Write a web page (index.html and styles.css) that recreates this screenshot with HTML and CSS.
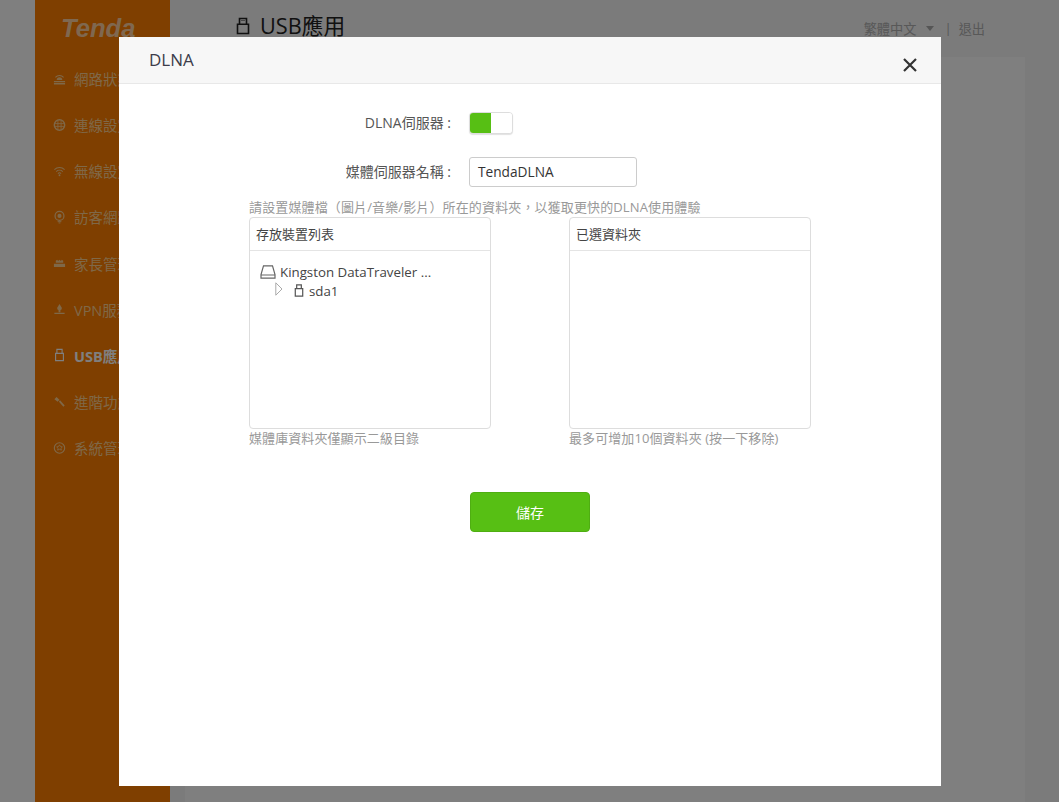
FILE: index.html
```html
<!DOCTYPE html>
<html lang="zh-Hant">
<head>
<meta charset="utf-8">
<title>USB應用</title>
<link rel="stylesheet" href="styles.css">
</head>
<body>
<div class="page">
  <aside class="sidebar">
    <div class="logo">Tenda</div>
    <nav class="nav">
      <a class="nav-item"><svg class="nav-icon" viewBox="0 0 14 14"><path d="M1 9.2h12v1.2H1zM1 11.4h12v1.4H1z" fill="currentColor"/><path d="M4 8.2a3 3 0 0 1 6 0z" fill="currentColor"/><path d="M2.6 5.2a6 6 0 0 1 8.8 0M4.4 3.2" fill="none" stroke="currentColor" stroke-width="1.1"/></svg>網路狀態</a>
      <a class="nav-item"><svg class="nav-icon" viewBox="0 0 14 14"><circle cx="7" cy="7" r="5.6" fill="none" stroke="currentColor" stroke-width="1.5"/><path d="M2 5.5h10M2 8.5h10M5.3 2v10M8.7 2v10" stroke="currentColor" stroke-width=".9" fill="none"/></svg>連線設定</a>
      <a class="nav-item"><svg class="nav-icon" viewBox="0 0 14 14"><path d="M1.5 5.5a8 8 0 0 1 11 0M3.5 7.7a5 5 0 0 1 7 0M5.3 9.7a2.5 2.5 0 0 1 3.4 0" fill="none" stroke="currentColor" stroke-width="1.1"/><circle cx="7" cy="11.6" r="1" fill="currentColor"/></svg>無線設定</a>
      <a class="nav-item"><svg class="nav-icon" viewBox="0 0 14 14"><circle cx="7" cy="5.8" r="4.8" fill="none" stroke="currentColor" stroke-width="1.3"/><circle cx="7" cy="5.8" r="2.2" fill="currentColor"/><path d="M5 12h4M6 13.4h2" stroke="currentColor"/></svg>訪客網路</a>
      <a class="nav-item"><svg class="nav-icon" viewBox="0 0 14 14"><path d="M1 7.8h12v3.6H1zM3 6.8V4.6l1.5-1 1 1.2L7 3.6l1.5 1.2 1-1.2 1.5 1v2.2z" fill="currentColor"/></svg>家長管理</a>
      <a class="nav-item"><svg class="nav-icon" viewBox="0 0 14 14"><path d="M7 1.5 9.6 6a2.6 2.6 0 1 1-5.2 0z" fill="currentColor"/><path d="M6 8h2v2.5H6zM1.5 11h11v1.4h-11z" fill="currentColor"/></svg>VPN服務</a>
      <a class="nav-item active"><svg class="nav-icon" viewBox="0 0 14 14"><path d="M4.2 5V1h5.6v4M2.8 5.2h8.4v7.8H2.8z" fill="none" stroke="currentColor" stroke-width="1.2"/></svg>USB應用</a>
      <a class="nav-item"><svg class="nav-icon" viewBox="0 0 14 14"><path d="M1.5 4 3.8 1.6 7 4.6 5 6.8zM6.4 6.6 7.6 5.2l5 5.6-1.4 1.4z" fill="currentColor"/></svg>進階功能</a>
      <a class="nav-item"><svg class="nav-icon" viewBox="0 0 14 14"><circle cx="7" cy="7" r="5.6" fill="none" stroke="currentColor" stroke-width="1.2"/><path d="M7 3.6 8 5.4l2 .3-1.4 1.6.4 2-2-.9-2 .9.4-2L4 5.7l2-.3z" fill="none" stroke="currentColor" stroke-width=".9"/></svg>系統管理</a>
    </nav>
  </aside>
  <main class="main">
    <header class="topbar">
      <h1 class="page-title"><svg class="title-icon" viewBox="0 0 14 18"><path d="M3.5 7V1.5h7V7M1.5 7.2h11v9.3h-11z" fill="none" stroke="currentColor" stroke-width="1.6"/><path d="M5.5 3.5h1M7.5 3.5h1" stroke="currentColor"/></svg>USB應用</h1>
      <div class="top-links"><span>繁體中文</span><i class="caret"></i><span class="sep">|</span><span>退出</span></div>
    </header>
    <div class="panel"></div>
  </main>
</div>
<div class="overlay">
  <section class="modal">
    <header class="modal-head">
      <h2 class="modal-title">DLNA</h2>
      <svg class="close" viewBox="0 0 14 14"><path d="M1 1l12 12M13 1 1 13" stroke="currentColor" stroke-width="2.2" fill="none"/></svg>
    </header>
    <div class="modal-body">
      <div class="row row-toggle">
        <label class="row-label">DLNA伺服器 :</label>
        <div class="toggle"><span class="toggle-on"></span><span class="toggle-off"></span></div>
      </div>
      <div class="row row-input">
        <label class="row-label">媒體伺服器名稱 :</label>
        <div class="text-input">TendaDLNA</div>
      </div>
      <p class="hint">請設置媒體檔（圖片/音樂/影片）所在的資料夾，以獲取更快的DLNA使用體驗</p>
      <div class="lists">
        <div class="list-col">
          <div class="list-box">
            <div class="list-head">存放裝置列表</div>
            <div class="tree">
              <div class="tree-row"><svg class="hdd" viewBox="0 0 16 14"><path d="M3.5 .8h9L15 9.5v3.7H1V9.5zM1 10h14" fill="none" stroke="currentColor" stroke-width="1.2"/></svg>Kingston DataTraveler ...</div>
              <div class="tree-row tree-sub"><svg class="arrow" viewBox="0 0 8 14"><path d="M.8 .8 7 7 .8 13.2z" fill="none" stroke="currentColor"/></svg><svg class="usb" viewBox="0 0 10 14"><path d="M2.5 5V1h5v4M1 5h8v8H1z" fill="none" stroke="currentColor" stroke-width="1.3"/></svg>sda1</div>
            </div>
          </div>
          <p class="note">媒體庫資料夾僅顯示二級目錄</p>
        </div>
        <div class="list-col">
          <div class="list-box">
            <div class="list-head">已選資料夾</div>
          </div>
          <p class="note">最多可增加10個資料夾 (按一下移除)</p>
        </div>
      </div>
      <button class="save" type="button">儲存</button>
    </div>
  </section>
</div>
</body>
</html>
```
FILE: styles.css
```css
* { box-sizing: border-box; }
html, body { margin: 0; height: 100%; overflow: hidden; }
body {
  font-family: "Open Sans", "Noto Sans CJK TC", sans-serif;
  font-size: 14px;
  color: #333;
  background: #fff;
}
.page { display: flex; height: 802px; padding-left: 35px; }
.sidebar { width: 135px; background: #ff7e00; color: #ffd090; flex: none; }
.logo {
  font-family: "Liberation Sans", sans-serif;
  font-style: italic;
  font-weight: 700;
  font-size: 25.6px;
  line-height: 30px;
  color: #ffd0a0;
  padding: 13px 0 0 26px;
  letter-spacing: 0;
}
.nav { margin-top: 12.5px; display: flex; flex-direction: column; }
.nav-item {
  display: flex;
  align-items: center;
  height: 46.15px;
  padding-left: 18px;
  font-size: 14.5px;
  white-space: nowrap;
}
.nav-item.active { color: #fff; font-weight: 700; }
.nav-icon { width: 13px; height: 14px; margin-right: 8px; flex: none; }
.main { flex: 1; background: #f6f6f6; padding-left: 15px; display: flex; flex-direction: column; }
.topbar { height: 57px; display: flex; justify-content: space-between; padding-right: 40px; width: 840px; }
.page-title {
  margin: 10px 0 0 51px;
  font-size: 21.7px;
  font-weight: 400;
  line-height: 32px;
  height: 32px;
  display: flex;
  align-items: center;
  color: #222;
}
.title-icon { width: 14px; height: 18px; margin-right: 10px; }
.top-links { display: flex; align-items: center; height: 20px; margin-top: 18px; font-size: 13.2px; color: #b0b0b0; }
.caret { width: 0; height: 0; border: 4px solid transparent; border-top: 5px solid #aaa; border-bottom: 0; margin: 1px 0 0 10px; }
.sep { margin: 0 7px 0 10px; }
.panel { width: 840px; flex: 1; background: #fff; }
.overlay { position: absolute; inset: 0; background: rgba(0, 0, 0, .5); padding: 37px 0 0 119px; }
.modal { width: 822px; height: 749px; background: #fff; }
.modal-head {
  height: 47px;
  background: #f7f7f7;
  border-bottom: 1px solid #e8e8e8;
  display: flex;
  justify-content: space-between;
  padding: 0 24px 0 30px;
}
.modal-title { margin: 12px 0 0; font-size: 17px; font-weight: 400; line-height: 22px; color: #3c3c4a; }
.close { width: 14px; height: 14px; margin-top: 21px; color: #333; }
.modal-body { width: 562px; margin: 0 auto; display: flex; flex-direction: column; }
.row { display: flex; align-items: center; color: #555; }
.row-toggle { margin-top: 28px; height: 22px; }
.row-input { margin-top: 23px; height: 30px; }
.row-label { width: 202px; margin-right: 18px; margin-bottom: 3px; text-align: right; white-space: nowrap; }
.toggle { width: 44px; height: 22px; display: flex; border: 1px solid #ddd; border-radius: 4px; overflow: hidden; background: #fff; box-shadow: 0 1px 1px rgba(0, 0, 0, .12); }
.toggle-on { width: 21px; background: #57bf14; }
.toggle-off { flex: 1; background: #fff; }
.text-input {
  width: 168px;
  height: 30px;
  border: 1px solid #ccc;
  border-radius: 3px;
  padding: 0 8px;
  font-size: 13.7px;
  line-height: 28px;
  color: #333;
}
.hint { margin: 11px 0 0; font-size: 13px; line-height: 19px; letter-spacing: .13px; color: #999; white-space: nowrap; }
.lists { display: flex; justify-content: space-between; margin-top: 0; }
.list-col { width: 242px; }
.list-box { height: 212px; border: 1px solid #ddd; border-radius: 4px; }
.list-head { height: 33px; padding-left: 6px; line-height: 32px; font-size: 13px; color: #444; border-bottom: 1px solid #e4e4e4; }
.tree { padding: 11px 0 0 10px; font-size: 13.3px; color: #444; }
.tree-row { display: flex; align-items: center; height: 19px; white-space: nowrap; }
.tree-sub { padding-left: 15px; }
.hdd { width: 16px; height: 14px; margin-right: 4px; color: #666; }
.arrow { width: 8px; height: 14px; margin: -4px 11px 0 0; color: #aaa; }
.usb { width: 10px; height: 13px; margin-right: 5px; color: #555; }
.note { margin: 0; font-size: 13px; line-height: 19px; letter-spacing: .08px; color: #999; white-space: nowrap; }
.save {
  align-self: center;
  width: 120px;
  height: 40px;
  margin-top: 44px;
  background: #57bf14;
  border: 1px solid #4fae12;
  border-radius: 4px;
  color: #fff;
  font: 14px "Noto Sans CJK TC", sans-serif;
}
```
